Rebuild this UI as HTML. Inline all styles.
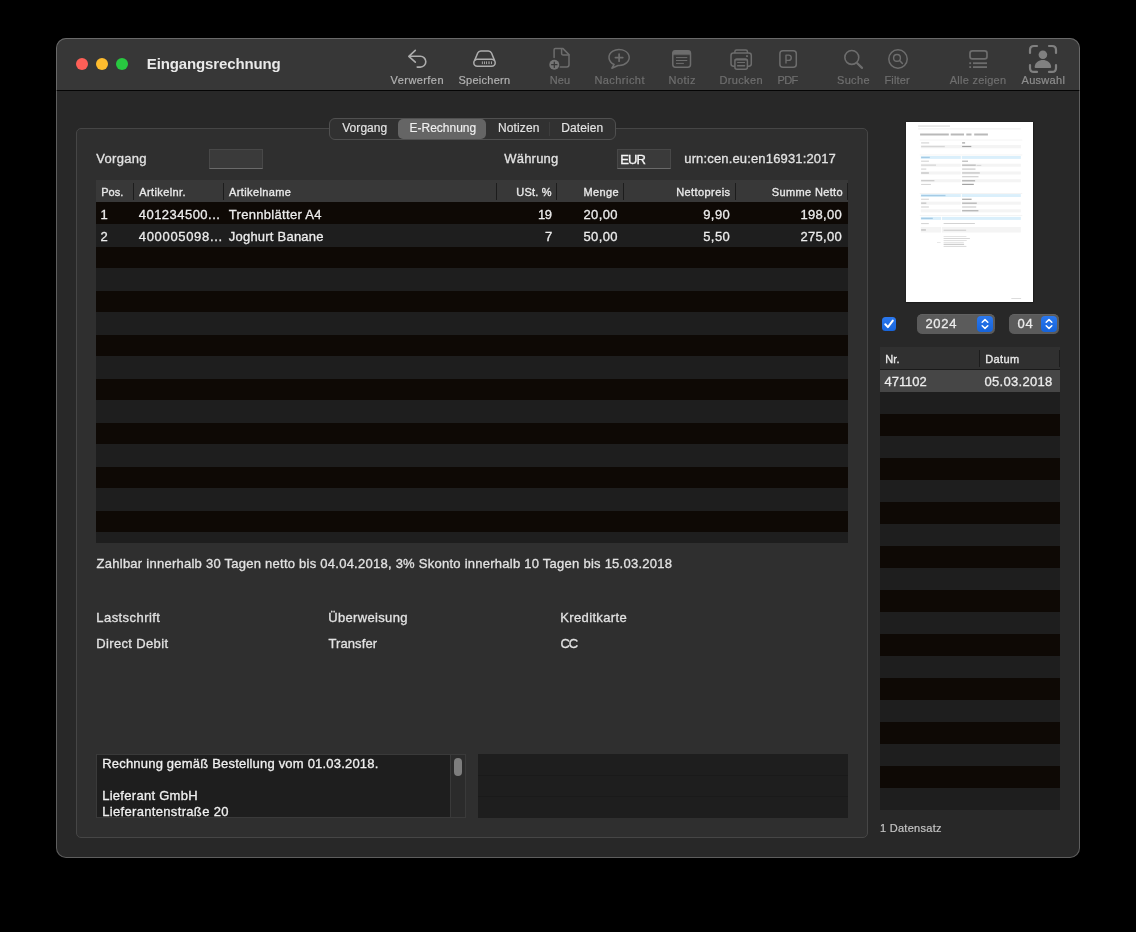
<!DOCTYPE html>
<html lang="de"><head><meta charset="utf-8"><title>Eingangsrechnung</title>
<style>
html,body{margin:0;padding:0;background:#000;}
body{width:1136px;height:932px;position:relative;overflow:hidden;font-family:"Liberation Sans",sans-serif;}
.abs{position:absolute;}
.t{position:absolute;white-space:pre;font-family:"Liberation Sans",sans-serif;}
#win{position:absolute;left:56px;top:38px;width:1024px;height:820px;border-radius:10px;background:#282828;overflow:hidden;}
#winborder{position:absolute;left:56px;top:38px;width:1024px;height:820px;border-radius:10px;box-shadow:inset 0 0 0 1px rgba(255,255,255,0.25);pointer-events:none;}
#titlebar{position:absolute;left:0;top:0;width:1024px;height:52px;background:#373737;}
#tbline{position:absolute;left:0;top:52px;width:1024px;height:1px;background:#050505;}
.tl{position:absolute;width:12px;height:12px;border-radius:50%;top:58px;}
#group{position:absolute;left:76px;top:128px;width:792px;height:710px;box-sizing:border-box;border:1px solid #464646;border-radius:5px;background:#2f2f2f;}
#seg{position:absolute;left:329px;top:118px;width:287px;height:22px;box-sizing:border-box;border:1px solid #505050;border-radius:6px;background:#313131;}
#segsel{position:absolute;left:398px;top:119px;width:88px;height:20px;border-radius:5px;background:#656565;}
.inp{position:absolute;height:20px;background:#3a3a3a;box-sizing:border-box;border:1px solid #484848;border-bottom-color:#6a6a6a;}
.hd{position:absolute;background:#383838;}
.vd{position:absolute;width:1px;background:#1c1c1c;}
.rows{position:absolute;overflow:hidden;background:repeating-linear-gradient(to bottom,#0e0905 0,#0e0905 22px,#1e1e1e 22px,#1e1e1e 44px);}
.pop{position:absolute;height:20px;border-radius:5.5px;background:#5b5b5b;box-shadow:0 0.5px 0 0 #6a6a6a inset;}
.popb{position:absolute;width:16px;height:16px;border-radius:4px;background:linear-gradient(#2b78ee,#1563da);}
#texts{position:absolute;left:0;top:0;width:1136px;height:932px;will-change:transform;transform:translateZ(0);}

</style></head>
<body>
<div id="win">
  <div id="titlebar"></div>
  <div id="tbline"></div>
</div>
<div class="tl" style="left:76px;background:#fe5f57"></div>
<div class="tl" style="left:96px;background:#febc2e"></div>
<div class="tl" style="left:116px;background:#28c840"></div>
<!--ICONS_START-->
<svg class="abs" style="left:0;top:0" width="1136" height="100" viewBox="0 0 1136 100" fill="none" stroke-linecap="round" stroke-linejoin="round">
<!-- Verwerfen -->
<g stroke="#adadad" stroke-width="1.6">
<path d="M415.3 50.4 L408.8 56.3 L415.3 62.2 M409.3 56.3 H420.4 A5.4 5.4 0 0 1 420.4 67.1 H417.2"/>
</g>
<!-- Speichern -->
<g stroke="#adadad" stroke-width="1.5">
<path d="M474.7 60.4 L477.7 53 Q478.6 50.9 480.8 50.9 H488.4 Q490.6 50.9 491.5 53 L494.5 60.4"/>
<rect x="473.8" y="59.3" width="21.4" height="7" rx="3.5"/>
</g>
<g fill="#adadad" stroke="none">
<rect x="481.9" y="61.4" width="0.9" height="2.7"/><rect x="484" y="61.4" width="0.9" height="2.7"/><rect x="486.1" y="61.4" width="0.9" height="2.7"/><rect x="488.1" y="61.4" width="1.8" height="2.7" opacity="0.6"/><rect x="491" y="61.4" width="0.9" height="2.7"/>
</g>
<!-- Neu -->
<g stroke="#6d6d6d" stroke-width="1.5">
<path d="M554.1 57.6 V49.8 Q554.1 48.6 555.3 48.6 H563 L569 54.6 V64.8 Q569 67 566.8 67 H560.3"/>
<path d="M561.6 48.8 V53.6 Q561.6 54.9 562.9 54.9 H568.8"/>
</g>
<circle cx="554.3" cy="64.7" r="5" fill="#757575"/>
<path d="M551.6 64.7 H557 M554.3 62 V67.4" stroke="#373737" stroke-width="1.2"/>
<!-- Nachricht -->
<g stroke="#6d6d6d" stroke-width="1.5">
<path d="M614.1 64.45 A10.1 8 0 1 1 618 65.45 L611.9 68.2 Z"/>
<path d="M615.4 57.6 H622.8 M619.1 54 V61.2" stroke-width="1.7"/>
</g>
<!-- Notiz -->
<g stroke="#6d6d6d" stroke-width="1.5">
<rect x="672.8" y="50.8" width="17.7" height="16.4" rx="2.6"/>
<path d="M672.8 54.3 V53.4 Q672.8 50.8 675.4 50.8 H687.9 Q690.5 50.8 690.5 53.4 V54.3 Z" fill="#6d6d6d" stroke-width="0.8"/>
<path d="M676.4 57.6 H686.9 M676.4 60.5 H686.9 M676.4 63.4 H683.5" stroke-width="1"/>
</g>
<!-- Drucken -->
<g stroke="#6d6d6d" stroke-width="1.5">
<path d="M734.9 52.6 V51.6 Q734.9 50 736.5 50 H745.8 Q747.4 50 747.4 51.6 V52.6"/>
<path d="M734.2 66.2 H733.4 Q731 66.2 731 63.8 V55.4 Q731 53 733.4 53 H748.9 Q751.3 53 751.3 55.4 V63.8 Q751.3 66.2 748.9 66.2 H748.1"/>
<rect x="734.9" y="59" width="12.5" height="10.2" rx="2"/>
<path d="M735.4 59.8 H746.9" stroke-width="1.4"/>
<path d="M737.6 62.5 H744.6" stroke-width="1"/>
<path d="M737.6 65.8 H744.6" stroke-width="1.4"/>
</g>
<rect x="746.1" y="55.2" width="1.8" height="1.8" fill="#6d6d6d"/>
<!-- PDF -->
<g stroke="#6d6d6d" stroke-width="1.5">
<rect x="779.9" y="50.8" width="16.4" height="16.4" rx="3"/>
<path d="M786 63 V55.1 H788.6 A2.65 2.65 0 0 1 788.6 60.4 H786" stroke-width="1.4"/>
</g>
<!-- Suche -->
<g stroke="#6d6d6d">
<circle cx="851.8" cy="57.4" r="6.95" stroke-width="1.6"/>
<path d="M857.2 63.2 L862 67.9" stroke-width="2.2"/>
</g>
<!-- Filter -->
<g stroke="#6d6d6d" stroke-width="1.5">
<circle cx="898" cy="59.05" r="9.2"/>
<circle cx="897" cy="57.9" r="3.4" stroke-width="1.4"/>
<path d="M899.6 60.5 L902.4 63.4" stroke-width="1.5"/>
</g>
<!-- Alle zeigen -->
<g stroke="#6d6d6d" stroke-width="1.7">
<rect x="970" y="50.9" width="17" height="8" rx="2.4"/>
</g>
<g fill="#6d6d6d" stroke="none">
<rect x="969.3" y="62.3" width="1.8" height="1.8"/><rect x="973" y="62.3" width="14" height="1.8"/>
<rect x="969.3" y="66.2" width="1.8" height="1.8"/><rect x="973" y="66.2" width="14" height="1.8"/>
</g>
<!-- Auswahl -->
<g stroke="#808080" stroke-width="2.2">
<path d="M1030 53 V50 Q1030 46 1034 46 H1037"/>
<path d="M1049 46 H1052 Q1056 46 1056 50 V53"/>
<path d="M1030 65.2 V67.9 Q1030 71.9 1034 71.9 H1037"/>
<path d="M1049 71.9 H1052 Q1056 71.9 1056 67.9 V65.2"/>
</g>
<g fill="#808080" stroke="none">
<circle cx="1042.9" cy="54.7" r="4.3"/>
<path d="M1034.6 66.9 C1035.6 57.8 1050.2 57.8 1051.2 66.9 Q1051.2 67.9 1050.2 67.9 H1035.6 Q1034.6 67.9 1034.6 66.9 Z"/>
</g>
</svg>
<!--ICONS_END-->
<div id="group"></div>
<div id="seg"></div>
<div id="segsel"></div>
<div class="abs" style="left:549px;top:122px;width:1px;height:14px;background:#3d3d3d"></div>
<!-- inputs -->
<div class="inp" style="left:209px;top:149px;width:54px"></div>
<div class="inp" style="left:617px;top:149px;width:54px"></div>
<!-- main table -->
<div class="hd" style="left:96px;top:180px;width:752px;height:22px"></div>
<div class="vd" style="left:133px;top:183px;height:17px"></div>
<div class="vd" style="left:223px;top:183px;height:17px"></div>
<div class="vd" style="left:496px;top:183px;height:17px"></div>
<div class="vd" style="left:556px;top:183px;height:17px"></div>
<div class="vd" style="left:623px;top:183px;height:17px"></div>
<div class="vd" style="left:735px;top:183px;height:17px"></div>
<div class="vd" style="left:847px;top:183px;height:17px"></div>
<div class="abs" style="left:96px;top:202px;width:752px;height:22px;background:#0e0905"></div>
<div class="abs" style="left:96px;top:224px;width:752px;height:319px;background:repeating-linear-gradient(to bottom,#1e1e1e 0,#1e1e1e 23px,#0e0905 23px,#0e0905 44px)"></div>
<!-- text area -->
<div class="abs" style="left:96px;top:754px;width:370px;height:64px;box-sizing:border-box;background:#1e1e1e;border:1px solid #3a3a3a"></div>
<div class="abs" style="left:450px;top:755px;width:15px;height:62px;background:#2b2b2b;border-left:1px solid #3a3a3a;box-sizing:border-box"></div>
<div class="abs" style="left:454px;top:758px;width:8px;height:18px;border-radius:4px;background:#7d7d7d"></div>
<div class="abs" style="left:478px;top:754px;width:370px;height:64px;background:#1e1e1e"></div>
<div class="abs" style="left:478px;top:775px;width:370px;height:1px;background:#1a1a1a"></div>
<div class="abs" style="left:478px;top:796px;width:370px;height:1px;background:#1a1a1a"></div>
<!-- preview -->
<div class="abs" style="left:906px;top:122px;width:127px;height:180px;background:#fff;box-shadow:0 0 1.5px 0.5px #0a0a0a"></div>
<!--PV_START-->
<svg class="abs" style="left:0;top:0" width="1136" height="320" viewBox="0 0 1136 320" shape-rendering="geometricPrecision">
<rect x="918.1" y="125.6" width="31.9" height="0.9" fill="#cfcfcf"/>
<rect x="918.1" y="128.5" width="102.7" height="0.8" fill="#e9e9e9"/>
<rect x="920.1" y="133.5" width="28.7" height="2.0" fill="#b9b9b9"/>
<rect x="950.7" y="133.5" width="13.3" height="2.0" fill="#b9b9b9"/>
<rect x="966.3" y="133.5" width="5.2" height="2.0" fill="#b9b9b9"/>
<rect x="974.2" y="133.5" width="13.7" height="2.0" fill="#b9b9b9"/>
<rect x="919.8" y="139.7" width="102.5" height="0.7" fill="#efefef"/>
<rect x="921.1" y="142.3" width="8.1" height="1.2" fill="#d6d6d6"/>
<rect x="962.1" y="142.3" width="3.0" height="1.2" fill="#a2a2a2"/>
<rect x="920.8" y="145.0" width="100.1" height="3.3" fill="#f4f4f4"/>
<rect x="921.1" y="145.9" width="23.7" height="1.3" fill="#d6d6d6"/>
<rect x="962.1" y="145.9" width="9.2" height="1.2" fill="#a2a2a2"/>
<rect x="919.8" y="154.6" width="102.5" height="0.7" fill="#efefef"/>
<rect x="920.8" y="156.0" width="40.0" height="2.9" fill="#daeffb"/>
<rect x="961.8" y="156.0" width="59.0" height="2.9" fill="#daeffb"/>
<rect x="921.1" y="156.8" width="8.7" height="1.3" fill="#a5cbe5"/>
<rect x="921.1" y="160.6" width="7.8" height="1.2" fill="#d6d6d6"/>
<rect x="962.1" y="160.6" width="5.9" height="1.2" fill="#b9b9b9"/>
<rect x="920.8" y="163.7" width="40.0" height="3.0" fill="#f4f4f4"/>
<rect x="961.8" y="163.7" width="59.0" height="3.0" fill="#f4f4f4"/>
<rect x="921.1" y="164.5" width="14.9" height="1.3" fill="#d6d6d6"/>
<rect x="962.1" y="164.5" width="13.7" height="1.3" fill="#b9b9b9"/>
<rect x="976.5" y="164.9" width="4.8" height="1.0" fill="#d5d5d5"/>
<rect x="921.1" y="168.5" width="5.2" height="1.2" fill="#d6d6d6"/>
<rect x="962.1" y="168.5" width="13.4" height="1.2" fill="#cacaca"/>
<rect x="920.8" y="171.5" width="40.0" height="3.0" fill="#f4f4f4"/>
<rect x="961.8" y="171.5" width="59.0" height="3.0" fill="#f4f4f4"/>
<rect x="921.1" y="172.3" width="7.8" height="1.4" fill="#c6c6c6"/>
<rect x="962.1" y="172.3" width="17.7" height="1.3" fill="#c4c4c4"/>
<rect x="962.1" y="176.1" width="16.4" height="1.2" fill="#d0d0d0"/>
<rect x="920.8" y="179.2" width="40.0" height="3.1" fill="#f4f4f4"/>
<rect x="961.8" y="179.2" width="59.0" height="3.1" fill="#f4f4f4"/>
<rect x="921.1" y="180.0" width="13.3" height="1.3" fill="#cdcdcd"/>
<rect x="962.1" y="180.0" width="13.0" height="1.5" fill="#b9b9b9"/>
<rect x="921.1" y="183.9" width="9.8" height="1.1" fill="#d6d6d6"/>
<rect x="962.1" y="183.8" width="11.7" height="1.2" fill="#a2a2a2"/>
<rect x="919.8" y="193.1" width="102.5" height="0.7" fill="#efefef"/>
<rect x="920.8" y="194.1" width="40.0" height="2.9" fill="#daeffb"/>
<rect x="961.8" y="194.1" width="59.0" height="2.9" fill="#daeffb"/>
<rect x="921.1" y="194.9" width="24.4" height="1.3" fill="#a5cbe5"/>
<rect x="921.1" y="198.7" width="7.8" height="1.1" fill="#d6d6d6"/>
<rect x="962.1" y="198.7" width="9.5" height="1.1" fill="#a2a2a2"/>
<rect x="920.8" y="201.6" width="40.0" height="3.1" fill="#f4f4f4"/>
<rect x="961.8" y="201.6" width="59.0" height="3.1" fill="#f4f4f4"/>
<rect x="921.1" y="202.5" width="5.2" height="1.3" fill="#c4c4c4"/>
<rect x="962.1" y="202.5" width="14.7" height="1.4" fill="#b9b9b9"/>
<rect x="921.1" y="206.4" width="7.8" height="1.2" fill="#d6d6d6"/>
<rect x="962.1" y="206.4" width="14.1" height="1.2" fill="#cdcdcd"/>
<rect x="920.8" y="209.3" width="40.0" height="3.1" fill="#f4f4f4"/>
<rect x="961.8" y="209.3" width="59.0" height="3.1" fill="#f4f4f4"/>
<rect x="962.1" y="210.0" width="16.3" height="1.4" fill="#b9b9b9"/>
<rect x="919.8" y="215.2" width="102.5" height="0.7" fill="#efefef"/>
<rect x="920.8" y="216.9" width="20.2" height="3.0" fill="#daeffb"/>
<rect x="941.9" y="216.9" width="78.9" height="3.0" fill="#daeffb"/>
<rect x="921.1" y="217.7" width="11.7" height="1.4" fill="#a5cbe5"/>
<rect x="921.1" y="223.0" width="7.7" height="1.1" fill="#d6d6d6"/>
<rect x="943.6" y="223.1" width="31.3" height="0.9" fill="#cfcfcf"/>
<rect x="920.8" y="227.0" width="20.2" height="5.5" fill="#f4f4f4"/>
<rect x="941.9" y="227.0" width="78.9" height="5.5" fill="#f4f4f4"/>
<rect x="921.1" y="229.2" width="4.8" height="1.5" fill="#c6c6c6"/>
<rect x="943.6" y="229.7" width="22.5" height="1.1" fill="#cfcfcf"/>
<rect x="943.6" y="236.1" width="22.8" height="0.8" fill="#dcdcdc"/>
<rect x="943.6" y="238.0" width="26.3" height="0.9" fill="#d4d4d4"/>
<rect x="943.6" y="240.0" width="23.1" height="0.8" fill="#dadada"/>
<rect x="937.0" y="242.0" width="3.6" height="0.7" fill="#dedede"/>
<rect x="943.6" y="241.9" width="20.2" height="0.8" fill="#dcdcdc"/>
<rect x="943.6" y="243.8" width="20.5" height="1.0" fill="#c2c2c2"/>
<rect x="943.6" y="245.9" width="22.8" height="0.9" fill="#d4d4d4"/>
<rect x="1011.3" y="298.1" width="9.8" height="0.8" fill="#d4d4d4"/>
</svg>
<!--PV_END-->
<!-- checkbox & popups -->
<div class="abs" style="left:882px;top:317px;width:14px;height:14px;border-radius:3.5px;background:linear-gradient(#2b78ee,#1765dc)"></div>
<svg class="abs" style="left:882px;top:317px" width="14" height="14" viewBox="0 0 14 14"><path d="M3.3 7.3 L5.9 10.1 L10.8 3.6" fill="none" stroke="#fff" stroke-width="2" stroke-linecap="round" stroke-linejoin="round"/></svg>
<div class="pop" style="left:917px;top:314px;width:78px"></div>
<div class="popb" style="left:977px;top:316px"></div>
<svg class="abs" style="left:977px;top:316px" width="16" height="16" viewBox="0 0 16 16"><path d="M5.2 6.3 L8 3.6 L10.8 6.3 M5.2 9.7 L8 12.4 L10.8 9.7" fill="none" stroke="#fff" stroke-width="1.5" stroke-linecap="round" stroke-linejoin="round"/></svg>
<div class="pop" style="left:1009px;top:314px;width:50px"></div>
<div class="popb" style="left:1041px;top:316px"></div>
<svg class="abs" style="left:1041px;top:316px" width="16" height="16" viewBox="0 0 16 16"><path d="M5.2 6.3 L8 3.6 L10.8 6.3 M5.2 9.7 L8 12.4 L10.8 9.7" fill="none" stroke="#fff" stroke-width="1.5" stroke-linecap="round" stroke-linejoin="round"/></svg>
<!-- right table -->
<div class="hd" style="left:880px;top:347px;width:180px;height:23px;background:#303030"></div>
<div class="abs" style="left:880px;top:369px;width:180px;height:1px;background:#1a1a1a"></div>
<div class="vd" style="left:979px;top:350px;height:17px"></div>
<div class="vd" style="left:1059px;top:350px;height:17px"></div>
<div class="rows" style="left:880px;top:370px;width:180px;height:440px"></div>
<div class="abs" style="left:880px;top:370px;width:180px;height:22px;background:#464646"></div>
<div id="winborder"></div>

<div id="texts">
<span class="t" style="left:146.75px;top:54.10px;font-size:15px;line-height:20px;color:#e9e9e9;letter-spacing:-0.122px;font-weight:700;">Eingangsrechnung</span>
<span class="t" style="left:390.60px;top:72.89px;font-size:11px;line-height:14px;color:#b2b2b2;letter-spacing:0.424px;-webkit-text-stroke:0.2px #b2b2b2;">Verwerfen</span>
<span class="t" style="left:458.50px;top:72.89px;font-size:11px;line-height:14px;color:#b2b2b2;letter-spacing:0.261px;-webkit-text-stroke:0.2px #b2b2b2;">Speichern</span>
<span class="t" style="left:549.75px;top:72.89px;font-size:11px;line-height:14px;color:#6f6f6f;letter-spacing:0.094px;-webkit-text-stroke:0.2px #6f6f6f;">Neu</span>
<span class="t" style="left:594.40px;top:72.89px;font-size:11px;line-height:14px;color:#6f6f6f;letter-spacing:0.450px;-webkit-text-stroke:0.2px #6f6f6f;">Nachricht</span>
<span class="t" style="left:668.50px;top:72.89px;font-size:11px;line-height:14px;color:#6f6f6f;letter-spacing:0.485px;-webkit-text-stroke:0.2px #6f6f6f;">Notiz</span>
<span class="t" style="left:719.40px;top:72.89px;font-size:11px;line-height:14px;color:#6f6f6f;letter-spacing:0.376px;-webkit-text-stroke:0.2px #6f6f6f;">Drucken</span>
<span class="t" style="left:777.50px;top:72.89px;font-size:11px;line-height:14px;color:#6f6f6f;letter-spacing:-0.640px;-webkit-text-stroke:0.2px #6f6f6f;">PDF</span>
<span class="t" style="left:837.00px;top:72.89px;font-size:11px;line-height:14px;color:#6f6f6f;letter-spacing:0.332px;-webkit-text-stroke:0.2px #6f6f6f;">Suche</span>
<span class="t" style="left:884.40px;top:72.89px;font-size:11px;line-height:14px;color:#6f6f6f;letter-spacing:0.164px;-webkit-text-stroke:0.2px #6f6f6f;">Filter</span>
<span class="t" style="left:949.75px;top:72.89px;font-size:11px;line-height:14px;color:#6f6f6f;letter-spacing:0.255px;-webkit-text-stroke:0.2px #6f6f6f;">Alle zeigen</span>
<span class="t" style="left:1021.50px;top:72.89px;font-size:11px;line-height:14px;color:#8e8e8e;letter-spacing:0.294px;-webkit-text-stroke:0.2px #8e8e8e;">Auswahl</span>
<span class="t" style="left:342.20px;top:119.84px;font-size:12px;line-height:16px;color:#e4e4e4;letter-spacing:0.061px;-webkit-text-stroke:0.15px #e4e4e4;">Vorgang</span>
<span class="t" style="left:409.60px;top:119.84px;font-size:12px;line-height:16px;color:#f0f0f0;letter-spacing:-0.015px;-webkit-text-stroke:0.15px #f0f0f0;">E-Rechnung</span>
<span class="t" style="left:498.00px;top:119.84px;font-size:12px;line-height:16px;color:#e4e4e4;letter-spacing:0.123px;-webkit-text-stroke:0.15px #e4e4e4;">Notizen</span>
<span class="t" style="left:561.25px;top:119.84px;font-size:12px;line-height:16px;color:#e4e4e4;letter-spacing:0.094px;-webkit-text-stroke:0.15px #e4e4e4;">Dateien</span>
<span class="t" style="left:96.25px;top:150.30px;font-size:13px;line-height:17px;color:#e2e2e2;letter-spacing:0.300px;-webkit-text-stroke:0.3px #e2e2e2;">Vorgang</span>
<span class="t" style="left:504.25px;top:150.30px;font-size:13px;line-height:17px;color:#e2e2e2;letter-spacing:0.205px;-webkit-text-stroke:0.3px #e2e2e2;">Währung</span>
<span class="t" style="left:620.30px;top:150.80px;font-size:13px;line-height:17px;color:#f6f6f6;letter-spacing:-0.880px;-webkit-text-stroke:0.3px #f6f6f6;">EUR</span>
<span class="t" style="left:684.25px;top:150.30px;font-size:13px;line-height:17px;color:#e2e2e2;letter-spacing:0.154px;-webkit-text-stroke:0.3px #e2e2e2;">urn:cen.eu:en16931:2017</span>
<span class="t" style="left:101.25px;top:185.39px;font-size:11px;line-height:14px;color:#e8e8e8;letter-spacing:0.015px;-webkit-text-stroke:0.35px #e8e8e8;">Pos.</span>
<span class="t" style="left:139.25px;top:185.39px;font-size:11px;line-height:14px;color:#e8e8e8;letter-spacing:0.391px;-webkit-text-stroke:0.35px #e8e8e8;">Artikelnr.</span>
<span class="t" style="left:229.00px;top:185.39px;font-size:11px;line-height:14px;color:#e8e8e8;letter-spacing:0.379px;-webkit-text-stroke:0.35px #e8e8e8;">Artikelname</span>
<span class="t" style="left:516.25px;top:185.39px;font-size:11px;line-height:14px;color:#e8e8e8;letter-spacing:0.210px;-webkit-text-stroke:0.35px #e8e8e8;">USt. %</span>
<span class="t" style="left:583.50px;top:185.39px;font-size:11px;line-height:14px;color:#e8e8e8;letter-spacing:0.371px;-webkit-text-stroke:0.35px #e8e8e8;">Menge</span>
<span class="t" style="left:676.25px;top:185.39px;font-size:11px;line-height:14px;color:#e8e8e8;letter-spacing:0.402px;-webkit-text-stroke:0.35px #e8e8e8;">Nettopreis</span>
<span class="t" style="left:771.75px;top:185.39px;font-size:11px;line-height:14px;color:#e8e8e8;letter-spacing:0.362px;-webkit-text-stroke:0.35px #e8e8e8;">Summe Netto</span>
<span class="t" style="left:100.50px;top:206.30px;font-size:13px;line-height:17px;color:#ececec;letter-spacing:0.000px;-webkit-text-stroke:0.3px #ececec;">1</span>
<span class="t" style="left:138.75px;top:206.30px;font-size:13px;line-height:17px;color:#ececec;letter-spacing:0.473px;-webkit-text-stroke:0.3px #ececec;">401234500...</span>
<span class="t" style="left:228.75px;top:206.30px;font-size:13px;line-height:17px;color:#ececec;letter-spacing:0.311px;-webkit-text-stroke:0.3px #ececec;">Trennblätter A4</span>
<span class="t" style="left:538.00px;top:206.30px;font-size:13px;line-height:17px;color:#ececec;letter-spacing:-0.480px;-webkit-text-stroke:0.3px #ececec;">19</span>
<span class="t" style="left:583.50px;top:206.30px;font-size:13px;line-height:17px;color:#ececec;letter-spacing:0.362px;-webkit-text-stroke:0.3px #ececec;">20,00</span>
<span class="t" style="left:703.25px;top:206.30px;font-size:13px;line-height:17px;color:#ececec;letter-spacing:0.393px;-webkit-text-stroke:0.3px #ececec;">9,90</span>
<span class="t" style="left:800.50px;top:206.30px;font-size:13px;line-height:17px;color:#ececec;letter-spacing:0.294px;-webkit-text-stroke:0.3px #ececec;">198,00</span>
<span class="t" style="left:100.50px;top:228.30px;font-size:13px;line-height:17px;color:#ececec;letter-spacing:0.000px;-webkit-text-stroke:0.3px #ececec;">2</span>
<span class="t" style="left:138.75px;top:228.30px;font-size:13px;line-height:17px;color:#ececec;letter-spacing:0.678px;-webkit-text-stroke:0.3px #ececec;">400005098...</span>
<span class="t" style="left:228.75px;top:228.30px;font-size:13px;line-height:17px;color:#ececec;letter-spacing:0.226px;-webkit-text-stroke:0.3px #ececec;">Joghurt Banane</span>
<span class="t" style="left:545.00px;top:228.30px;font-size:13px;line-height:17px;color:#ececec;letter-spacing:0.000px;-webkit-text-stroke:0.3px #ececec;">7</span>
<span class="t" style="left:583.50px;top:228.30px;font-size:13px;line-height:17px;color:#ececec;letter-spacing:0.362px;-webkit-text-stroke:0.3px #ececec;">50,00</span>
<span class="t" style="left:703.25px;top:228.30px;font-size:13px;line-height:17px;color:#ececec;letter-spacing:0.393px;-webkit-text-stroke:0.3px #ececec;">5,50</span>
<span class="t" style="left:800.50px;top:228.30px;font-size:13px;line-height:17px;color:#ececec;letter-spacing:0.294px;-webkit-text-stroke:0.3px #ececec;">275,00</span>
<span class="t" style="left:96.60px;top:554.70px;font-size:13px;line-height:17px;color:#e2e2e2;letter-spacing:0.252px;-webkit-text-stroke:0.3px #e2e2e2;">Zahlbar innerhalb 30 Tagen netto bis 04.04.2018, 3% Skonto innerhalb 10 Tagen bis 15.03.2018</span>
<span class="t" style="left:96.30px;top:608.80px;font-size:13px;line-height:17px;color:#e2e2e2;letter-spacing:0.437px;-webkit-text-stroke:0.3px #e2e2e2;">Lastschrift</span>
<span class="t" style="left:328.30px;top:608.80px;font-size:13px;line-height:17px;color:#e2e2e2;letter-spacing:0.326px;-webkit-text-stroke:0.3px #e2e2e2;">Überweisung</span>
<span class="t" style="left:560.30px;top:608.80px;font-size:13px;line-height:17px;color:#e2e2e2;letter-spacing:0.347px;-webkit-text-stroke:0.3px #e2e2e2;">Kreditkarte</span>
<span class="t" style="left:96.30px;top:634.80px;font-size:13px;line-height:17px;color:#e2e2e2;letter-spacing:0.346px;-webkit-text-stroke:0.3px #e2e2e2;">Direct Debit</span>
<span class="t" style="left:328.40px;top:634.80px;font-size:13px;line-height:17px;color:#e2e2e2;letter-spacing:0.116px;-webkit-text-stroke:0.3px #e2e2e2;">Transfer</span>
<span class="t" style="left:560.40px;top:634.80px;font-size:13px;line-height:17px;color:#e2e2e2;letter-spacing:-0.988px;-webkit-text-stroke:0.3px #e2e2e2;">CC</span>
<span class="t" style="left:102.20px;top:755.20px;font-size:13px;line-height:17px;color:#f0f0f0;letter-spacing:0.200px;-webkit-text-stroke:0.3px #f0f0f0;">Rechnung gemäß Bestellung vom 01.03.2018.</span>
<span class="t" style="left:102.20px;top:787.10px;font-size:13px;line-height:17px;color:#f0f0f0;letter-spacing:0.279px;-webkit-text-stroke:0.3px #f0f0f0;">Lieferant GmbH</span>
<span class="t" style="left:102.20px;top:802.90px;font-size:13px;line-height:17px;color:#f0f0f0;letter-spacing:0.330px;-webkit-text-stroke:0.3px #f0f0f0;">Lieferantenstraße 20</span>
<span class="t" style="left:925.40px;top:314.60px;font-size:13px;line-height:17px;color:#ececec;letter-spacing:0.703px;-webkit-text-stroke:0.3px #ececec;">2024</span>
<span class="t" style="left:1017.40px;top:314.60px;font-size:13px;line-height:17px;color:#ececec;letter-spacing:0.770px;-webkit-text-stroke:0.3px #ececec;">04</span>
<span class="t" style="left:885.30px;top:352.39px;font-size:11px;line-height:14px;color:#e8e8e8;letter-spacing:0.100px;-webkit-text-stroke:0.35px #e8e8e8;">Nr.</span>
<span class="t" style="left:985.30px;top:352.39px;font-size:11px;line-height:14px;color:#e8e8e8;letter-spacing:0.366px;-webkit-text-stroke:0.35px #e8e8e8;">Datum</span>
<span class="t" style="left:884.50px;top:373.00px;font-size:13px;line-height:17px;color:#ececec;letter-spacing:-0.037px;-webkit-text-stroke:0.3px #ececec;">471102</span>
<span class="t" style="left:984.40px;top:373.00px;font-size:13px;line-height:17px;color:#ececec;letter-spacing:0.307px;-webkit-text-stroke:0.3px #ececec;">05.03.2018</span>
<span class="t" style="left:880.00px;top:821.19px;font-size:11px;line-height:14px;color:#c4c4c4;letter-spacing:0.280px;-webkit-text-stroke:0.2px #c4c4c4;">1 Datensatz</span>
</div>
</body></html>
